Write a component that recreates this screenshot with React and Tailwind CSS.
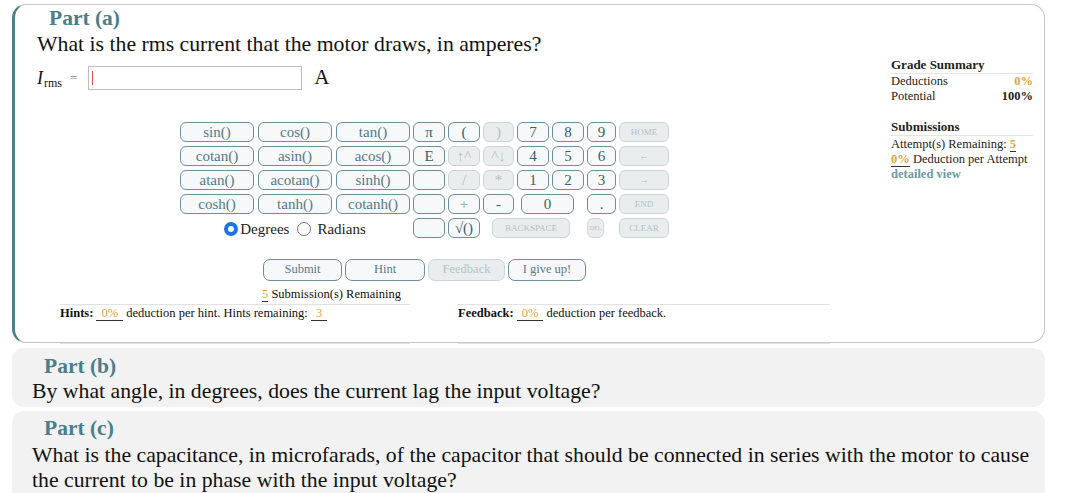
import React from 'react';

const fnRows = [
  ['sin()', 'cos()', 'tan()'],
  ['cotan()', 'asin()', 'acos()'],
  ['atan()', 'acotan()', 'sinh()'],
  ['cosh()', 'tanh()', 'cotanh()'],
];

// Keypad key: normal or disabled look
const Key = ({ label, className = '', disabled = false, small = false }) => (
  <div
    className={`h-[20px] flex items-center justify-center rounded-[6px] border leading-none overflow-hidden ${
      disabled
        ? 'bg-[#e9edee] border-[#cbd5d8] text-[#b3c0c4]'
        : 'bg-[#f6f8f9] border-[#6d8e9a] text-[#3f5e6b]'
    } ${small ? 'text-[9px]' : 'text-[15px]'} ${className}`}
  >
    {label}
  </div>
);

const Val = ({ children }) => (
  <span className="inline-block border-b border-[#333] px-[5px] leading-[13px] text-[#e9a23b]">{children}</span>
);

const Radio = ({ checked }) =>
  checked ? (
    <span className="inline-block w-[14px] h-[14px] rounded-full border-[4px] border-[#1a73e8] bg-white" />
  ) : (
    <span className="inline-block w-[14px] h-[14px] rounded-full border border-[#767676] bg-white" />
  );

const FnGroup = ({ row }) => (
  <div className="w-[230px] flex gap-[4px]">
    {row.map((f) => (
      <Key key={f} label={f} className="w-[74px] text-[#587784]" />
    ))}
  </div>
);

const Keypad = () => (
  <div className="flex flex-col gap-[4px] pl-[165px]">
    <div className="flex">
      <FnGroup row={fnRows[0]} />
      <div className="ml-[3px] flex gap-[3px]">
        <Key label="π" className="w-[32px]" />
        <Key label="(" className="w-[32px]" />
        <Key label=")" className="w-[31px]" disabled />
        <Key label="7" className="w-[32px]" />
        <Key label="8" className="w-[32px]" />
        <Key label="9" className="w-[29px]" />
        <Key label="HOME" className="w-[50px]" disabled small />
      </div>
    </div>
    <div className="flex">
      <FnGroup row={fnRows[1]} />
      <div className="ml-[3px] flex gap-[3px]">
        <Key label="E" className="w-[32px]" />
        <Key label="↑^" className="w-[32px] text-[12px]" disabled />
        <Key label="^↓" className="w-[31px] text-[12px]" disabled />
        <Key label="4" className="w-[32px]" />
        <Key label="5" className="w-[32px]" />
        <Key label="6" className="w-[29px]" />
        <Key label="←" className="w-[50px]" disabled small />
      </div>
    </div>
    <div className="flex">
      <FnGroup row={fnRows[2]} />
      <div className="ml-[3px] flex gap-[3px]">
        <Key label="" className="w-[32px]" />
        <Key label="/" className="w-[32px] text-[11px]" disabled />
        <Key label="*" className="w-[31px] text-[11px]" disabled />
        <Key label="1" className="w-[32px]" />
        <Key label="2" className="w-[32px]" />
        <Key label="3" className="w-[29px]" />
        <Key label="→" className="w-[50px]" disabled small />
      </div>
    </div>
    <div className="flex">
      <FnGroup row={fnRows[3]} />
      <div className="ml-[3px] flex">
        <Key label="" className="w-[32px]" />
        <Key label="+" className="w-[32px] ml-[3px] text-[#8aa3ad]" />
        <Key label="-" className="w-[31px] ml-[3px]" />
        <Key label="0" className="w-[53px] ml-[7px]" />
        <Key label="." className="w-[29px] ml-[13px]" />
        <Key label="END" className="w-[50px] ml-[3px]" disabled small />
      </div>
    </div>
    <div className="flex">
      <div className="w-[230px] flex items-center justify-center gap-[2px] text-[15px] text-[#222]">
        <Radio checked />
        <span>Degrees</span>
        <span className="ml-[6px] flex items-center"><Radio /></span>
        <span className="ml-[4px]">Radians</span>
      </div>
      <div className="ml-[3px] flex">
        <Key label="" className="w-[32px]" />
        <Key label="√()" className="w-[32px] ml-[3px]" />
        <Key label="BACKSPACE" className="w-[78px] ml-[12px]" disabled small />
        <Key label="DEL" className="w-[17px] ml-[17px] !text-[6px]" disabled small />
        <Key label="CLEAR" className="w-[50px] ml-[15px]" disabled small />
      </div>
    </div>
  </div>
);

const ActionBtn = ({ label, w, disabled }) => (
  <div
    className={`h-[22px] ${w} flex items-center justify-center rounded-[7px] border text-[12.5px] ${
      disabled
        ? 'bg-[#e9edee] border-[#cbd5d8] text-[#b7c3c7]'
        : 'bg-[#f6f8f9] border-[#6d8e9a] text-[#5b7a87]'
    }`}
  >
    {label}
  </div>
);

const GradeSummary = () => (
  <div className="w-[142px] pt-[52px] text-[12.5px] text-[#222]">
    <div className="font-bold text-[13px] leading-[16px] border-b border-[#e4e4e4]">Grade Summary</div>
    <div className="flex justify-between leading-[15px]">
      <span>Deductions</span>
      <span className="font-bold text-[#e9a23b]">0%</span>
    </div>
    <div className="flex justify-between leading-[15px]">
      <span>Potential</span>
      <span className="font-bold">100%</span>
    </div>
    <div className="mt-[15px] font-bold text-[13px] leading-[16px] border-b border-[#e4e4e4]">Submissions</div>
    <div className="leading-[15px] mt-[1px] whitespace-nowrap">
      Attempt(s) Remaining: <span className="font-bold text-[#e9a23b] border-b border-[#333]">5</span>
    </div>
    <div className="leading-[15px] whitespace-nowrap">
      <span className="font-bold text-[#e9a23b] border-b border-[#333]">0%</span> Deduction per Attempt
    </div>
    <div className="leading-[15px] font-bold text-[#6d98a6]">detailed view</div>
  </div>
);

export default function App() {
  return (
    <div className="w-[1089px] h-[493px] bg-white overflow-hidden font-['Liberation_Serif',serif] text-[#111]">
      {/* Part (a) */}
      <div className="ml-[12px] mt-[4px] w-[1033px] h-[339px] flex border border-[#c6c6c6] border-l-[3px] border-l-[#4f7e8c] rounded-[14px]">
        <div className="w-[876px]">
          <div className="mt-[1px] pl-[34px] text-[21.5px] leading-[25px] font-bold text-[#4b7d8c]">Part (a)</div>
          <div className="pl-[22px] text-[21.75px] leading-[25px] pt-[1px]">
            What is the rms current that the motor draws, in amperes?
          </div>
          <div className="mt-[9px] pl-[22px] h-[24px] flex items-center">
            <span className="italic text-[18px]">I</span>
            <span className="text-[12px] mt-[9px] ml-[1px]">rms</span>
            <span className="text-[13px] text-[#777] ml-[8px]">=</span>
            <div className="ml-[11px] w-[214px] h-[24px] border border-[#bdbdbd] flex items-center pl-[3px]">
              <span className="w-[1px] h-[14px] bg-[#e05050]" />
            </div>
            <span className="ml-[12px] text-[21px]">A</span>
          </div>
          <div className="mt-[32px]">
            <Keypad />
          </div>
          <div className="mt-[18px] pl-[248px] flex gap-[3px]">
            <ActionBtn label="Submit" w="w-[79px]" />
            <ActionBtn label="Hint" w="w-[80px]" />
            <ActionBtn label="Feedback" w="w-[77px]" disabled />
            <ActionBtn label="I give up!" w="w-[78px]" />
          </div>
          <div className="mt-[5px] pl-[247px] h-[16px] text-[12.5px] leading-[16px]">
            <span className="text-[#e9a23b] border-b border-[#333]">5</span> Submission(s) Remaining
          </div>
          <div className="mt-[2px] pl-[45px] flex gap-[48px] text-[12.5px]">
            <div className="w-[350px] h-[40px] border-t border-b border-[#e2e2e2] pt-[1px] leading-[15px]">
              <span className="font-bold">Hints:</span> <Val>0%</Val> deduction per hint. Hints remaining:{' '}
              <Val>3</Val>
            </div>
            <div className="w-[372px] h-[40px] border-t border-b border-[#e2e2e2] pt-[1px] leading-[15px]">
              <span className="font-bold">Feedback:</span> <Val>0%</Val> deduction per feedback.
            </div>
          </div>
        </div>
        <GradeSummary />
      </div>

      {/* Part (b) */}
      <div className="ml-[12px] mt-[5px] w-[1033px] h-[59px] bg-[#f2f2f2] rounded-[12px] pt-[6px]">
        <div className="pl-[32px] text-[21.5px] leading-[25px] font-bold text-[#4b7d8c]">Part (b)</div>
        <div className="pl-[20px] text-[21.75px] leading-[25px]">
          By what angle, in degrees, does the current lag the input voltage?
        </div>
      </div>

      {/* Part (c) */}
      <div className="ml-[12px] mt-[4px] w-[1033px] h-[100px] bg-[#f2f2f2] rounded-[12px] pt-[5px]">
        <div className="pl-[32px] text-[21.5px] leading-[25px] font-bold text-[#4b7d8c]">Part (c)</div>
        <div className="mt-[2px] pl-[20px] text-[21.75px] leading-[25px] whitespace-nowrap">
          What is the capacitance, in microfarads, of the capacitor that should be connected in series with the motor to cause
          <br />
          the current to be in phase with the input voltage?
        </div>
      </div>
    </div>
  );
}
